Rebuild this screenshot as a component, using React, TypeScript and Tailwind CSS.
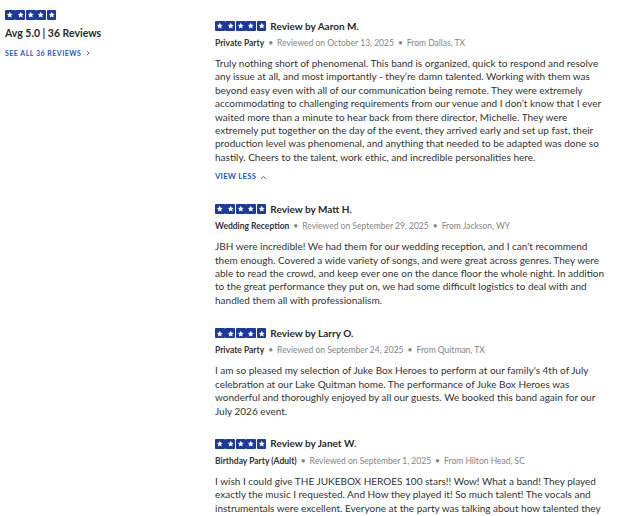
import { ChevronRight, ChevronUp } from "lucide-react"

type Review = {
  name: string
  event: string
  date: string
  from: string
  body: string
  expanded?: boolean
}

const reviews: Review[] = [
  {
    name: "Aaron M.",
    event: "Private Party",
    date: "October 13, 2025",
    from: "Dallas, TX",
    expanded: true,
    body: "Truly nothing short of phenomenal. This band is organized, quick to respond and resolve any issue at all, and most importantly - they’re damn talented. Working with them was beyond easy even with all of our communication being remote. They were extremely accommodating to challenging requirements from our venue and I don’t know that I ever waited more than a minute to hear back from there director, Michelle. They were extremely put together on the day of the event, they arrived early and set up fast, their production level was phenomenal, and anything that needed to be adapted was done so hastily. Cheers to the talent, work ethic, and incredible personalities here.",
  },
  {
    name: "Matt H.",
    event: "Wedding Reception",
    date: "September 29, 2025",
    from: "Jackson, WY",
    body: "JBH were incredible! We had them for our wedding reception, and I can't recommend them enough. Covered a wide variety of songs, and were great across genres. They were able to read the crowd, and keep ever one on the dance floor the whole night. In addition to the great performance they put on, we had some difficult logistics to deal with and handled them all with professionalism.",
  },
  {
    name: "Larry O.",
    event: "Private Party",
    date: "September 24, 2025",
    from: "Quitman, TX",
    body: "I am so pleased my selection of Juke Box Heroes to perform at our family's 4th of July celebration at our Lake Quitman home. The performance of Juke Box Heroes was wonderful and thoroughly enjoyed by all our guests. We booked this band again for our July 2026 event.",
  },
  {
    name: "Janet W.",
    event: "Birthday Party (Adult)",
    date: "September 1, 2025",
    from: "Hilton Head, SC",
    body: "I wish I could give THE JUKEBOX HEROES 100 stars!! Wow! What a band! They played exactly the music I requested. And How they played it! So much talent! The vocals and instrumentals were excellent. Everyone at the party was talking about how talented they were and how much fun they had dancing all night long.",
  },
]

function Stars() {
  return (
    <div className="flex gap-[0.6px] shrink-0">
      {[0, 1, 2, 3, 4].map((i) => (
        <div key={i} className="w-[9.8px] h-[9.8px] bg-[#1b3a9c] rounded-[1px] flex items-center justify-center">
          <svg viewBox="0 0 24 24" className="w-[7.5px] h-[7.5px]" fill="white">
            <path d="M12 2.5l2.9 6.2 6.6.7-4.9 4.5 1.4 6.6L12 17.2l-6 3.3 1.4-6.6-4.9-4.5 6.6-.7z" />
          </svg>
        </div>
      ))}
    </div>
  )
}

function ReviewItem({ review }: { review: Review }) {
  return (
    <div className="mb-[20px]">
      {/* 星级 + 评论人 */}
      <div className="flex items-center gap-[4px] h-[12px]">
        <Stars />
        <span className="text-[10px] font-bold text-[#2b2b2b]">Review by {review.name}</span>
      </div>

      {/* 活动 / 日期 / 地点 */}
      <div className="flex items-center h-[12px] mt-[5px] text-[8.5px] text-[#858585]">
        <span className="font-bold text-[#333]">{review.event}</span>
        <span className="mx-[4px]">•</span>
        <span>Reviewed on {review.date}</span>
        <span className="mx-[4px]">•</span>
        <span>From {review.from}</span>
      </div>

      <p className="mt-[8px] w-[392px] text-[10px] leading-[13.4px] text-[#333]">{review.body}</p>

      {review.expanded && (
        <button className="flex items-center gap-[3px] h-[12px] mt-[7px] text-[7.8px] font-bold tracking-[0.2px] text-[#2457c9]">
          VIEW LESS
          <ChevronUp className="w-[9px] h-[9px]" strokeWidth={2.5} />
        </button>
      )}
    </div>
  )
}

export default function App() {
  return (
    <div className="flex w-[629px] h-[516px] overflow-hidden bg-white font-['Lato',sans-serif]">
      {/* 汇总 */}
      <div className="w-[215px] shrink-0 pl-[5px] pt-[10px]">
        <Stars />
        <div className="mt-[6px] text-[10.5px] font-bold text-[#2b2b2b]">Avg 5.0 | 36 Reviews</div>
        <button className="flex items-center gap-[3px] mt-[6px] text-[7px] font-bold tracking-[0.5px] text-[#2457c9]">
          SEE ALL 36 REVIEWS
          <ChevronRight className="w-[8px] h-[8px]" strokeWidth={2.5} />
        </button>
      </div>

      {/* 评论列表 */}
      <div className="pt-[20px]">
        {reviews.map((r) => (
          <ReviewItem key={r.name} review={r} />
        ))}
      </div>
    </div>
  )
}
